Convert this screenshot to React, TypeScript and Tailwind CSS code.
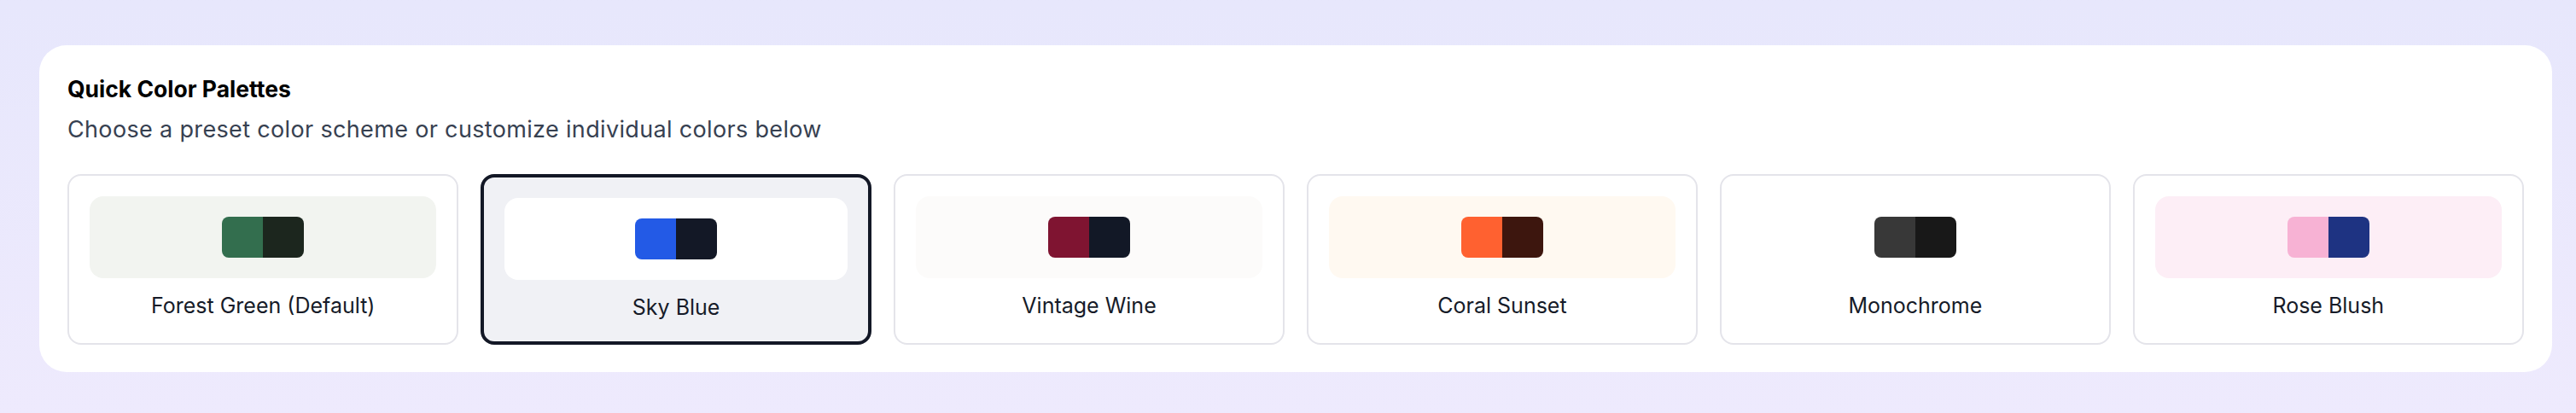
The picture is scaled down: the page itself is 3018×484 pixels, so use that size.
import React from "react";

type Palette = {
  name: string;
  primary: string;
  secondary: string;
  preview: string;
};

const palettes: Palette[] = [
  { name: "Forest Green (Default)", primary: "#336e4e", secondary: "#1c261e", preview: "bg-[#f2f4f0]" },
  { name: "Sky Blue", primary: "#235ae6", secondary: "#131826", preview: "bg-white" },
  { name: "Vintage Wine", primary: "#7f1431", secondary: "#121826", preview: "bg-[#fcfbfa]" },
  { name: "Coral Sunset", primary: "#ff6130", secondary: "#3d160e", preview: "bg-[#fff9f1]" },
  { name: "Monochrome", primary: "#383838", secondary: "#181818", preview: "bg-white" },
  { name: "Rose Blush", primary: "#f7b2d4", secondary: "#1e3382", preview: "bg-[#fdeef6]" },
];

function PaletteTile({ palette, selected }: { palette: Palette; selected: boolean }) {
  return (
    <button
      type="button"
      className={
        selected
          ? "flex flex-col gap-4 rounded-[16px] border-4 border-[#131826] bg-[#f0f1f5] p-6 text-left"
          : "flex flex-col gap-4 rounded-[16px] border-2 border-[#e4e4ea] bg-white p-6 text-left"
      }
    >
      <div className={`flex h-24 w-full items-center justify-center rounded-[16px] ${palette.preview}`}>
        <div className="flex overflow-hidden rounded-[8px]">
          <div className="h-12 w-12" style={{ backgroundColor: palette.primary }} />
          <div className="h-12 w-12" style={{ backgroundColor: palette.secondary }} />
        </div>
      </div>
      <span className="block h-8 w-full text-center text-[25px] leading-[32px] text-[#161b28]">
        {palette.name}
      </span>
    </button>
  );
}

export default function App() {
  const selectedName = "Sky Blue";
  return (
    <div className="h-[484px] w-full overflow-hidden bg-linear-to-b from-[#e7e7fc] to-[#eeeafd] pb-[48px] pl-[46px] pr-[28px] pt-[53px] font-[Inter,sans-serif]">
      <section className="rounded-[32px] bg-white px-[33px] pb-[32px] pt-[33px]">
        <h2 className="text-[26.5px] font-bold leading-[37px] text-black">Quick Color Palettes</h2>
        <p className="mt-[9.5px] text-[27px] leading-[37px] tracking-[0.34px] text-[#374151]">
          Choose a preset color scheme or customize individual colors below
        </p>
        <div className="mt-[34px] grid grid-cols-6 gap-[25.5px]">
          {palettes.map((p) => (
            <PaletteTile key={p.name} palette={p} selected={p.name === selectedName} />
          ))}
        </div>
      </section>
    </div>
  );
}
